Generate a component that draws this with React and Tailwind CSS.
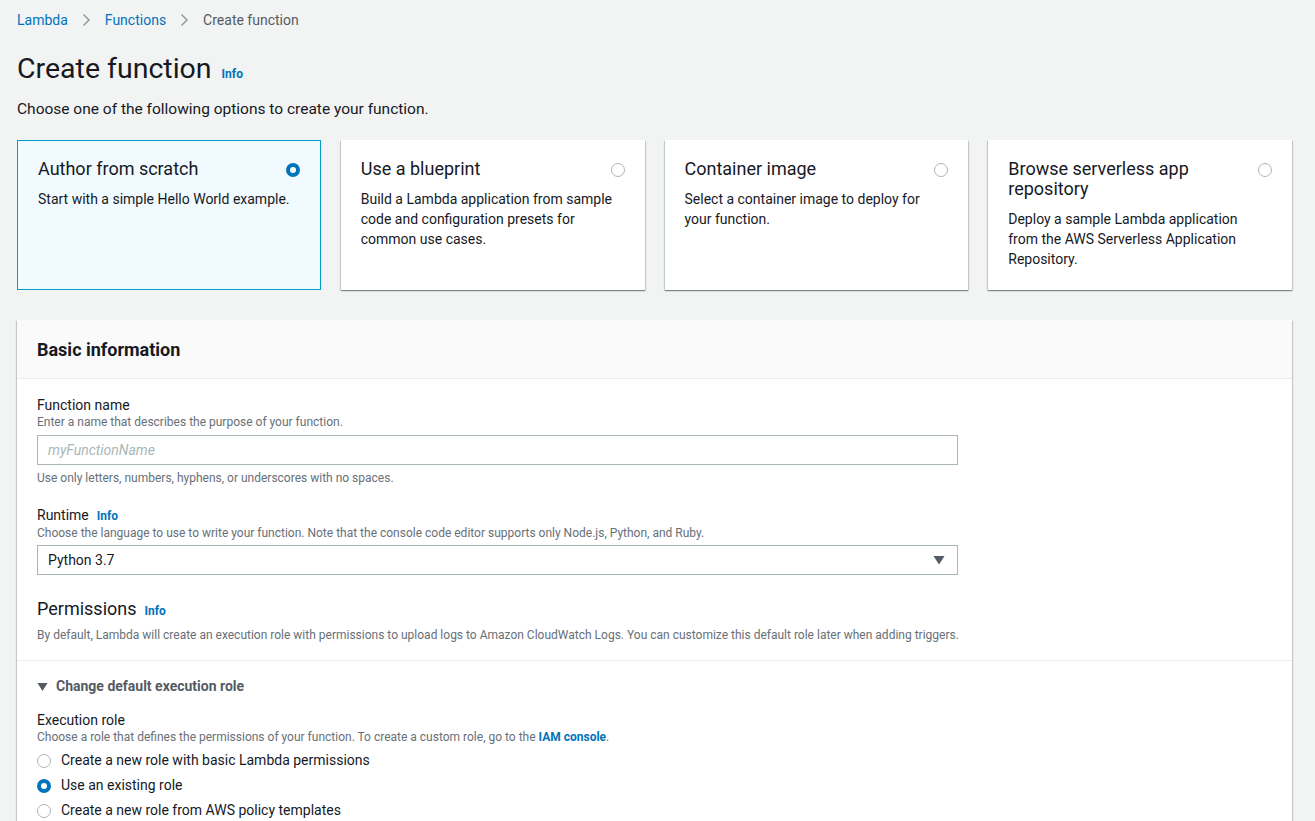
import { useState } from 'react';

const cards = [
  { key: 'scratch', title: 'Author from scratch', desc: 'Start with a simple Hello World example.' },
  { key: 'blueprint', title: 'Use a blueprint', desc: 'Build a Lambda application from sample code and configuration presets for common use cases.' },
  { key: 'container', title: 'Container image', desc: 'Select a container image to deploy for your function.' },
  { key: 'serverless', title: 'Browse serverless app repository', desc: 'Deploy a sample Lambda application from the AWS Serverless Application Repository.' },
];

const roles = [
  'Create a new role with basic Lambda permissions',
  'Use an existing role',
  'Create a new role from AWS policy templates',
];

function Radio({ checked }) {
  return checked ? (
    <span className="flex h-[14px] w-[14px] shrink-0 items-center justify-center rounded-full bg-[#0073bb]">
      <span className="block h-[6px] w-[6px] rounded-full bg-white" />
    </span>
  ) : (
    <span className="block h-[14px] w-[14px] shrink-0 rounded-full border border-[#aab7b8] bg-white" />
  );
}

function Info() {
  return <span className="ml-2 text-[12px] font-bold text-[#0073bb]">Info</span>;
}

function Chevron() {
  return (
    <svg className="mx-[14px]" width="9" height="14" viewBox="0 0 9 14" fill="none">
      <path d="M1.5 1.5l5.5 5.5-5.5 5.5" stroke="#879596" strokeWidth="1.4" />
    </svg>
  );
}

export default function App() {
  const [option, setOption] = useState('scratch');
  const [role, setRole] = useState(1);

  return (
    <div className="min-h-screen bg-[#f2f3f3] px-[17px] pt-[11px] text-[14px] text-[#16191f] [font-family:Roboto,'Liberation_Sans',sans-serif]">
      {/* Breadcrumb */}
      <nav className="flex h-[18px] items-center text-[14px]">
        <span className="text-[#0073bb]">Lambda</span>
        <Chevron />
        <span className="text-[#0073bb]">Functions</span>
        <Chevron />
        <span className="text-[#545b64]">Create function</span>
      </nav>

      <div className="mt-[22px] flex items-baseline">
        <h1 className="text-[28.5px] leading-[36px] font-normal text-[#16191f]">Create function</h1>
        <span className="ml-[10px] text-[12px] font-bold text-[#0073bb]">Info</span>
      </div>

      <p className="mt-[12px] text-[15.5px] leading-[20px] text-[#16191f]">
        Choose one of the following options to create your function.
      </p>

      {/* Option cards */}
      <div className="mt-[21px] grid w-[1275px] grid-cols-4 gap-[20px]">
        {cards.map((c) => {
          const active = option === c.key;
          return (
            <button
              key={c.key}
              onClick={() => setOption(c.key)}
              className={`flex h-[150px] flex-col items-stretch px-[20px] pt-[18px] text-left ${
                active
                  ? 'border border-[#00a1c9] bg-[#f1faff]'
                  : 'bg-white pt-[19px] shadow-[0_1px_1px_0_rgba(0,28,36,0.3),1px_1px_1px_0_rgba(0,28,36,0.15),-1px_1px_1px_0_rgba(0,28,36,0.15)]'
              }`}
            >
              <div className="flex items-start justify-between gap-4">
                <span className="text-[18px] leading-[20px] text-[#16191f]">{c.title}</span>
                <span className="mt-[4px] block">
                  <Radio checked={active} />
                </span>
              </div>
              <p className="mt-[10px] max-w-[256px] text-[14px] leading-[20px] text-[#16191f]">{c.desc}</p>
            </button>
          );
        })}
      </div>

      {/* Basic information */}
      <section className="mt-[30px] w-[1275px] bg-white shadow-[0_1px_1px_0_rgba(0,28,36,0.3),1px_1px_1px_0_rgba(0,28,36,0.15),-1px_1px_1px_0_rgba(0,28,36,0.15)]">
        <header className="flex h-[59px] items-center border-b border-[#eaeded] bg-[#fafafa] px-[20px]">
          <h2 className="text-[18px] font-bold text-[#16191f]">Basic information</h2>
        </header>

        <div className="px-[20px] pt-[17px]">
          <label className="block text-[14px] leading-[18px]">Function name</label>
          <p className="text-[12px] leading-[16px] text-[#687078]">Enter a name that describes the purpose of your function.</p>
          <input
            className="mt-[5px] h-[30px] w-[921px] border border-[#aab7b8] bg-white px-[10px] text-[14px] placeholder:italic placeholder:text-[#aab7b8] outline-none"
            placeholder="myFunctionName"
          />
          <p className="mt-[5px] text-[12px] leading-[16px] text-[#687078]">
            Use only letters, numbers, hyphens, or underscores with no spaces.
          </p>

          <div className="mt-[20px] flex items-baseline">
            <label className="text-[14px] leading-[18px]">Runtime</label>
            <Info />
          </div>
          <p className="text-[12px] leading-[16px] text-[#687078]">
            Choose the language to use to write your function. Note that the console code editor supports only Node.js, Python, and Ruby.
          </p>
          <div className="mt-[4px] flex h-[30px] w-[921px] items-center justify-between border border-[#aab7b8] bg-white pr-[12px] pl-[10px]">
            <span className="text-[14px]">Python 3.7</span>
            <svg width="12" height="10" viewBox="0 0 12 10">
              <path d="M0.5 1h11L6 9.5z" fill="#545b64" />
            </svg>
          </div>

          <div className="mt-[23px] flex items-baseline">
            <h3 className="text-[18px] leading-[22px]">Permissions</h3>
            <Info />
          </div>
          <p className="mt-[7px] pb-[17px] text-[12px] leading-[16px] text-[#687078]">
            By default, Lambda will create an execution role with permissions to upload logs to Amazon CloudWatch Logs. You can customize this default role later when adding triggers.
          </p>
        </div>

        <div className="border-t border-[#eaeded] px-[20px] pt-[15px] pb-[10px]">
          <div className="flex items-center gap-[8px]">
            <svg width="11" height="10" viewBox="0 0 11 10">
              <path d="M0.5 1h10L5.5 9z" fill="#545b64" />
            </svg>
            <span className="text-[14px] font-bold text-[#545b64]">Change default execution role</span>
          </div>

          <label className="mt-[14px] block text-[14px] leading-[18px]">Execution role</label>
          <p className="text-[12px] leading-[16px] text-[#687078]">
            Choose a role that defines the permissions of your function. To create a custom role, go to the{' '}
            <span className="font-bold text-[#0073bb]">IAM console</span>.
          </p>
          <div className="mt-[3px] flex flex-col">
            {roles.map((r, i) => (
              <button
                key={r}
                onClick={() => setRole(i)}
                className="flex h-[25px] items-center gap-[10px] text-left text-[14px]"
              >
                <Radio checked={role === i} />
                <span>{r}</span>
              </button>
            ))}
          </div>
        </div>
      </section>
    </div>
  );
}
